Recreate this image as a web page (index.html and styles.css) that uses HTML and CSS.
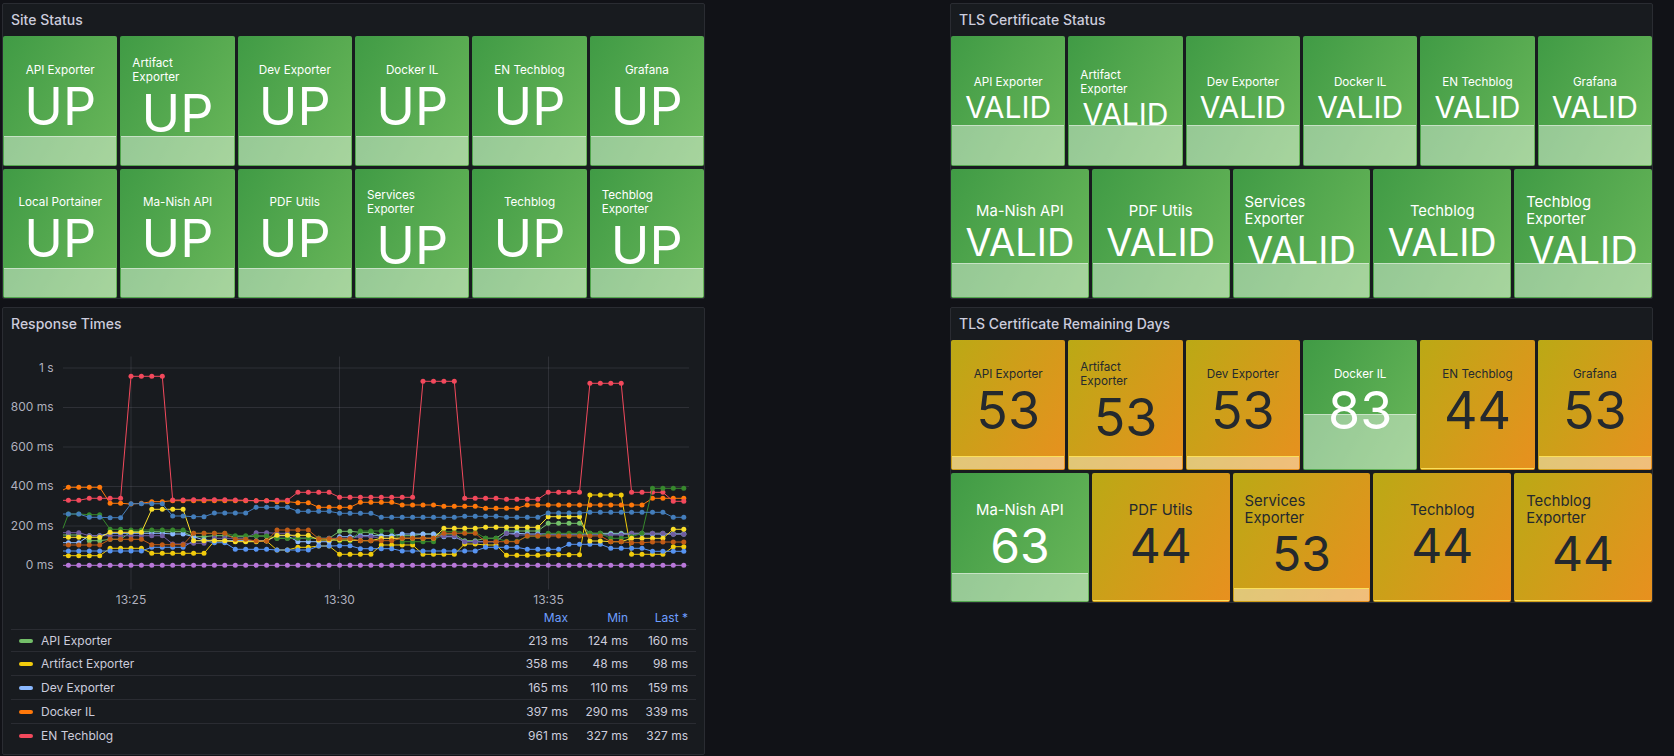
FILE: index.html
```html
<!DOCTYPE html>
<html lang="en">
<head>
<meta charset="utf-8">
<title>Site Monitoring</title>
<link rel="stylesheet" href="styles.css">
</head>
<body>
<main class="dashboard">
  <div class="column">
    <section class="panel">
      <h2 class="panel-title">Site Status</h2>
      <div class="tiles">
        <div class="tile-row">
          <div class="tile green"><div class="tile-title">API Exporter</div><div class="tile-value">UP</div><div class="spark h29"></div></div>
          <div class="tile green"><div class="tile-title">Artifact Exporter</div><div class="tile-value">UP</div><div class="spark h29"></div></div>
          <div class="tile green"><div class="tile-title">Dev Exporter</div><div class="tile-value">UP</div><div class="spark h29"></div></div>
          <div class="tile green"><div class="tile-title">Docker IL</div><div class="tile-value">UP</div><div class="spark h29"></div></div>
          <div class="tile green"><div class="tile-title">EN Techblog</div><div class="tile-value">UP</div><div class="spark h29"></div></div>
          <div class="tile green"><div class="tile-title">Grafana</div><div class="tile-value">UP</div><div class="spark h29"></div></div>
        </div>
        <div class="tile-row">
          <div class="tile green"><div class="tile-title">Local Portainer</div><div class="tile-value">UP</div><div class="spark h29"></div></div>
          <div class="tile green"><div class="tile-title">Ma-Nish API</div><div class="tile-value">UP</div><div class="spark h29"></div></div>
          <div class="tile green"><div class="tile-title">PDF Utils</div><div class="tile-value">UP</div><div class="spark h29"></div></div>
          <div class="tile green"><div class="tile-title">Services Exporter</div><div class="tile-value">UP</div><div class="spark h29"></div></div>
          <div class="tile green"><div class="tile-title">Techblog</div><div class="tile-value">UP</div><div class="spark h29"></div></div>
          <div class="tile green"><div class="tile-title">Techblog Exporter</div><div class="tile-value">UP</div><div class="spark h29"></div></div>
        </div>
      </div>
    </section>

    <section class="panel panel-tall">
      <h2 class="panel-title">Response Times</h2>
      <svg id="chart" class="chart" width="701" height="268" viewBox="3 340 701 268" role="img" aria-label="Response times"></svg>
      <table class="legend">
        <thead>
          <tr><th class="legend-name"></th><th>Max</th><th>Min</th><th>Last *</th></tr>
        </thead>
        <tbody>
          <tr class="c1"><td class="legend-name"><span class="swatch"></span>API Exporter</td><td>213 ms</td><td>124 ms</td><td>160 ms</td></tr>
          <tr class="c2"><td class="legend-name"><span class="swatch"></span>Artifact Exporter</td><td>358 ms</td><td>48 ms</td><td>98 ms</td></tr>
          <tr class="c3"><td class="legend-name"><span class="swatch"></span>Dev Exporter</td><td>165 ms</td><td>110 ms</td><td>159 ms</td></tr>
          <tr class="c4"><td class="legend-name"><span class="swatch"></span>Docker IL</td><td>397 ms</td><td>290 ms</td><td>339 ms</td></tr>
          <tr class="c5"><td class="legend-name"><span class="swatch"></span>EN Techblog</td><td>961 ms</td><td>327 ms</td><td>327 ms</td></tr>
        </tbody>
      </table>
    </section>
  </div>

  <div class="column">
    <section class="panel">
      <h2 class="panel-title">TLS Certificate Status</h2>
      <div class="tiles">
        <div class="tile-row valid">
          <div class="tile green"><div class="tile-title">API Exporter</div><div class="tile-value">VALID</div><div class="spark h41"></div></div>
          <div class="tile green"><div class="tile-title">Artifact Exporter</div><div class="tile-value">VALID</div><div class="spark h41"></div></div>
          <div class="tile green"><div class="tile-title">Dev Exporter</div><div class="tile-value">VALID</div><div class="spark h41"></div></div>
          <div class="tile green"><div class="tile-title">Docker IL</div><div class="tile-value">VALID</div><div class="spark h41"></div></div>
          <div class="tile green"><div class="tile-title">EN Techblog</div><div class="tile-value">VALID</div><div class="spark h41"></div></div>
          <div class="tile green"><div class="tile-title">Grafana</div><div class="tile-value">VALID</div><div class="spark h41"></div></div>
        </div>
        <div class="tile-row wide valid">
          <div class="tile green"><div class="tile-title">Ma-Nish API</div><div class="tile-value">VALID</div><div class="spark h34"></div></div>
          <div class="tile green"><div class="tile-title">PDF Utils</div><div class="tile-value">VALID</div><div class="spark h34"></div></div>
          <div class="tile green"><div class="tile-title">Services Exporter</div><div class="tile-value">VALID</div><div class="spark h34"></div></div>
          <div class="tile green"><div class="tile-title">Techblog</div><div class="tile-value">VALID</div><div class="spark h34"></div></div>
          <div class="tile green"><div class="tile-title">Techblog Exporter</div><div class="tile-value">VALID</div><div class="spark h34"></div></div>
        </div>
      </div>
    </section>

    <section class="panel">
      <h2 class="panel-title">TLS Certificate Remaining Days</h2>
      <div class="tiles">
        <div class="tile-row">
          <div class="tile amber"><div class="tile-title">API Exporter</div><div class="tile-value">53</div><div class="spark h13"></div></div>
          <div class="tile amber"><div class="tile-title">Artifact Exporter</div><div class="tile-value">53</div><div class="spark h13"></div></div>
          <div class="tile amber"><div class="tile-title">Dev Exporter</div><div class="tile-value">53</div><div class="spark h13"></div></div>
          <div class="tile green"><div class="tile-title">Docker IL</div><div class="tile-value">83</div><div class="spark h56"></div></div>
          <div class="tile amber"><div class="tile-title">EN Techblog</div><div class="tile-value">44</div><div class="spark h1"></div></div>
          <div class="tile amber"><div class="tile-title">Grafana</div><div class="tile-value">53</div><div class="spark h13"></div></div>
        </div>
        <div class="tile-row wide days">
          <div class="tile green"><div class="tile-title">Ma-Nish API</div><div class="tile-value">63</div><div class="spark h28"></div></div>
          <div class="tile amber"><div class="tile-title">PDF Utils</div><div class="tile-value">44</div><div class="spark h1"></div></div>
          <div class="tile amber"><div class="tile-title">Services Exporter</div><div class="tile-value">53</div><div class="spark h13"></div></div>
          <div class="tile amber"><div class="tile-title">Techblog</div><div class="tile-value">44</div><div class="spark h1"></div></div>
          <div class="tile amber"><div class="tile-title">Techblog Exporter</div><div class="tile-value">44</div><div class="spark h1"></div></div>
        </div>
      </div>
    </section>
  </div>
</main>
<script src="chart.js"></script>
</body>
</html>
```
FILE: styles.css
```css
* { box-sizing: border-box; }

html, body {
  margin: 0;
  height: 100%;
  overflow: hidden;
  background: #111217;
}

body {
  font-family: Inter, "Liberation Sans", sans-serif;
  color: #ccccdc;
}

.dashboard {
  display: grid;
  grid-template-columns: 703px 703px;
  column-gap: 245px;
  padding: 3px 0 0 2px;
}

.column {
  display: flex;
  flex-direction: column;
  gap: 8px;
}

.panel {
  display: flex;
  flex-direction: column;
  height: 296px;
  background: #181b1f;
  border: 1px solid #2a2c32;
  border-radius: 2px;
}

.panel-tall { height: 448px; }

.panel-title {
  flex: none;
  height: 32px;
  margin: 0;
  padding: 0 8px;
  font-size: 14px;
  font-weight: 500;
  line-height: 31px;
  color: #ccccdc;
}

.tiles {
  flex: 1;
  display: flex;
  flex-direction: column;
  gap: 3px;
  min-height: 0;
}

.tile-row {
  flex: 1;
  display: flex;
  gap: 3px;
  min-height: 0;
}

.tile {
  position: relative;
  flex: 1 1 0;
  min-width: 0;
  display: flex;
  flex-direction: column;
  align-items: center;
  justify-content: center;
  padding: 0 12px 2px;
  border-radius: 2px;
  overflow: hidden;
}

.wide .tile { padding-bottom: 0; }

.green {
  background: linear-gradient(120deg, #409b45, #6ab75a);
  color: #fff;
}

.amber {
  background: linear-gradient(120deg, #bba915, #e8901f);
  color: #24292e;
}

.tile-title {
  position: relative;
  z-index: 1;
  font-size: 11.7px;
  line-height: 14px;
  text-align: left;
}

.tile-value {
  position: relative;
  z-index: 1;
  font-size: 52px;
  font-weight: 430;
  line-height: 60px;
  white-space: nowrap;
}

.valid .tile-value {
  font-size: 30px;
  line-height: 36px;
}

.wide .tile-title {
  font-size: 14.8px;
  line-height: 17px;
}

.wide.valid .tile-value {
  font-size: 38px;
  line-height: 44px;
}

.wide.days .tile-value {
  font-size: 48px;
  line-height: 54px;
}

.spark {
  position: absolute;
  left: 1px;
  right: 1px;
  bottom: 1px;
  background: rgba(255, 255, 255, 0.41);
  border-top: 1px solid rgba(255, 255, 255, 0.45);
}

.amber .spark { border-top-color: #fbe05c; }

.h1  { height: 1px; }
.h13 { height: 13px; }
.h28 { height: 28px; }
.h29 { height: 29px; }
.h34 { height: 34px; }
.h41 { height: 40px; }
.h56 { height: 55px; }

.chart {
  display: block;
  flex: none;
}

.grid-line {
  stroke: rgba(204, 204, 220, 0.12);
  stroke-width: 1;
}

.axis-label {
  font-size: 12px;
  fill: rgba(204, 204, 220, 0.85);
  dominant-baseline: central;
}

.axis-y { text-anchor: end; }
.axis-x { text-anchor: middle; }

.series-line {
  fill: none;
  stroke: var(--c);
  stroke-width: 1;
}

.series-dot { fill: var(--c); }

.c1  { --c: #73bf69; }
.c2  { --c: #f2cc0c; }
.c3  { --c: #8ab8ff; }
.c4  { --c: #ff780a; }
.c5  { --c: #f2495c; }
.c6  { --c: #5794f2; }
.c7  { --c: #b877d9; }
.c8  { --c: #705da0; }
.c9  { --c: #37872d; }
.c10 { --c: #fade2a; }
.c11 { --c: #447ebc; }
.c12 { --c: #c15c17; }

.legend {
  width: 685px;
  margin-left: 8px;
  border-collapse: collapse;
  table-layout: fixed;
  font-size: 12px;
  color: #ccccdc;
}

.legend th {
  height: 21px;
  padding: 0 0 1px;
  width: 60px;
  text-align: right;
  font-weight: 400;
  color: #6e9fff;
}

.legend th:last-child { width: 68px; padding-right: 8px; }
.legend th.legend-name { width: auto; }

.legend td {
  height: 24px;
  padding: 0;
  text-align: right;
  border-top: 1px solid #2a2c32;
}

.legend tbody tr:first-child td { height: 22px; }

.legend td:last-child { padding-right: 8px; }

.legend .legend-name {
  text-align: left;
  padding-left: 8px;
}

.swatch {
  display: inline-block;
  width: 14px;
  height: 4px;
  margin-right: 8px;
  border-radius: 2px;
  vertical-align: middle;
  background: var(--c);
}
```
FILE: chart.js
```js
// position in thirds of a pixel relative to y = 470; 286 is the 0 ms line.
var SERIES = [
  { cls: 'c1', v: [195,195,212,212,208,208,185,185,185,185,185,185,200,200,197,197,200,200,198,198,
                   205,205,205,205,205,205,184,184,187,187,197,197,197,197,192,192,192,192,212,212,
                   205,205,183,183,183,183,160,160,160,160,190,190,190,190,190,190,190,190,192,192] },
  { cls: 'c2', v: [257,257,257,257,235,235,235,235,250,250,250,250,250,250,213,213,213,213,213,213,
                   240,240,232,232,228,228,253,253,253,253,225,225,225,225,253,253,253,253,222,222,
                   225,225,256,256,256,256,254,254,254,254,75,75,75,75,253,253,253,253,230,230] },
  { cls: 'c3', v: [218,218,197,197,190,190,190,190,190,190,192,192,200,210,212,212,212,212,212,212,
                   197,197,215,215,215,215,200,200,197,197,197,197,192,192,192,192,200,200,215,215,
                   215,215,190,190,192,192,192,192,192,192,192,192,192,192,192,192,192,192,192,192] },
  { cls: 'c4', v: [52,52,52,52,100,100,102,100,95,95,92,92,92,92,92,92,92,92,92,92,
                   95,95,98,98,112,112,112,112,97,97,97,97,105,105,105,105,109,109,109,109,
                   115,115,115,115,105,105,105,105,105,105,105,105,105,105,105,105,85,85,85,85], lead: 60 },
  { cls: 'c5', v: [91,91,85,85,85,85,-281,-281,-281,-281,90,90,89,89,89,89,90,91,92,92,
                   91,91,67,67,67,67,82,82,82,82,82,82,82,82,-266,-266,-266,-266,85,85,
                   85,85,88,88,88,88,67,67,67,67,-260,-260,-260,-260,67,67,67,67,94,94] },
  { cls: 'c6', v: [243,243,243,243,243,243,243,243,232,232,232,232,212,212,218,218,238,238,238,238,
                   240,240,240,240,228,228,227,227,236,236,236,236,243,243,243,243,243,243,243,243,
                   232,232,232,232,238,238,238,238,223,223,223,223,235,235,235,235,244,244,244,244] },
  { cls: 'c7', v: [286,286,286,286,286,286,286,286,286,286,286,286,286,286,286,286,286,286,286,286,
                   286,286,286,286,286,286,286,286,286,286,286,286,286,286,286,286,286,286,286,286,
                   286,286,286,286,286,286,286,286,286,286,286,286,286,286,286,286,286,286,286,286] },
  { cls: 'c8', v: [188,188,197,197,197,197,197,197,197,197,222,222,220,220,205,205,205,205,188,188,
                   190,190,205,205,205,205,205,205,200,200,205,205,205,205,205,205,198,198,215,215,
                   215,215,190,195,195,195,195,195,195,195,195,195,195,195,190,190,190,190,193,193] },
  { cls: 'c9', v: [132,132,134,134,178,178,180,180,180,180,180,180,190,190,190,190,197,197,198,198,
                   205,205,205,205,205,208,212,212,183,183,183,183,215,215,215,215,185,185,187,187,
                   205,205,214,214,199,199,190,190,190,190,190,190,205,205,200,190,55,55,55,55], lead: 175 },
  { cls: 'c10', v: [202,202,202,202,187,187,187,187,118,118,118,118,212,212,212,212,215,215,215,212,
                    196,196,196,196,210,210,210,210,212,212,205,205,205,205,205,205,175,175,175,175,
                    172,172,172,172,172,172,140,140,140,140,213,213,215,215,205,205,205,205,178,178] },
  { cls: 'c11', v: [132,132,142,142,143,143,101,101,101,101,138,138,140,140,129,129,129,129,112,112,
                    112,112,124,124,124,124,130,130,130,130,142,142,142,142,142,142,142,142,139,139,
                    139,139,142,142,142,142,129,129,129,129,127,127,127,127,127,127,127,127,142,142] },
  { cls: 'c12', v: [225,225,225,225,208,208,208,208,224,224,224,224,190,190,190,190,208,208,213,213,
                    180,180,180,180,206,206,206,206,212,212,212,212,205,205,205,205,190,190,190,190,
                    215,215,215,215,198,198,198,198,198,198,198,198,215,215,218,218,216,216,216,216] }
];

var NS = 'http://www.w3.org/2000/svg';
var svg = document.getElementById('chart');

function el(name, attrs, text) {
  var node = document.createElementNS(NS, name);
  for (var key in attrs) node.setAttribute(key, attrs[key]);
  if (text) node.textContent = text;
  svg.appendChild(node);
  return node;
}

var LEFT = 63, RIGHT = 689;
var TICKS_Y = [['1 s', 368], ['800 ms', 407.5], ['600 ms', 447], ['400 ms', 486.5], ['200 ms', 526], ['0 ms', 565.5]];
var TICKS_X = [['13:25', 131], ['13:30', 339.5], ['13:35', 548.5]];

TICKS_Y.forEach(function (t) {
  el('line', { 'class': 'grid-line', x1: LEFT, x2: RIGHT, y1: t[1], y2: t[1] });
  el('text', { 'class': 'axis-label axis-y', x: 53.5, y: t[1] - 1 }, t[0]);
});
TICKS_X.forEach(function (t) {
  el('line', { 'class': 'grid-line', x1: t[1], x2: t[1], y1: 356.5, y2: 589.5 });
  el('text', { 'class': 'axis-label axis-x', x: t[1], y: 599 }, t[0]);
});

function px(i) { return 68.4 + 10.43 * i; }
function py(v) { return 470 + v / 3; }

SERIES.forEach(function (s) {
  var g = el('g', { 'class': s.cls });
  var lead = s.lead !== undefined ? s.lead : s.v[0];
  var pts = [LEFT + ',' + py(lead)];
  s.v.forEach(function (v, i) { pts.push(px(i).toFixed(1) + ',' + py(v).toFixed(1)); });
  pts.push('686,' + py(s.v[s.v.length - 1]).toFixed(1));
  var line = document.createElementNS(NS, 'polyline');
  line.setAttribute('class', 'series-line');
  line.setAttribute('points', pts.join(' '));
  g.appendChild(line);
  s.v.forEach(function (v, i) {
    var c = document.createElementNS(NS, 'circle');
    c.setAttribute('class', 'series-dot');
    c.setAttribute('cx', px(i).toFixed(1));
    c.setAttribute('cy', py(v).toFixed(1));
    c.setAttribute('r', 2.5);
    g.appendChild(c);
  });
});
```
